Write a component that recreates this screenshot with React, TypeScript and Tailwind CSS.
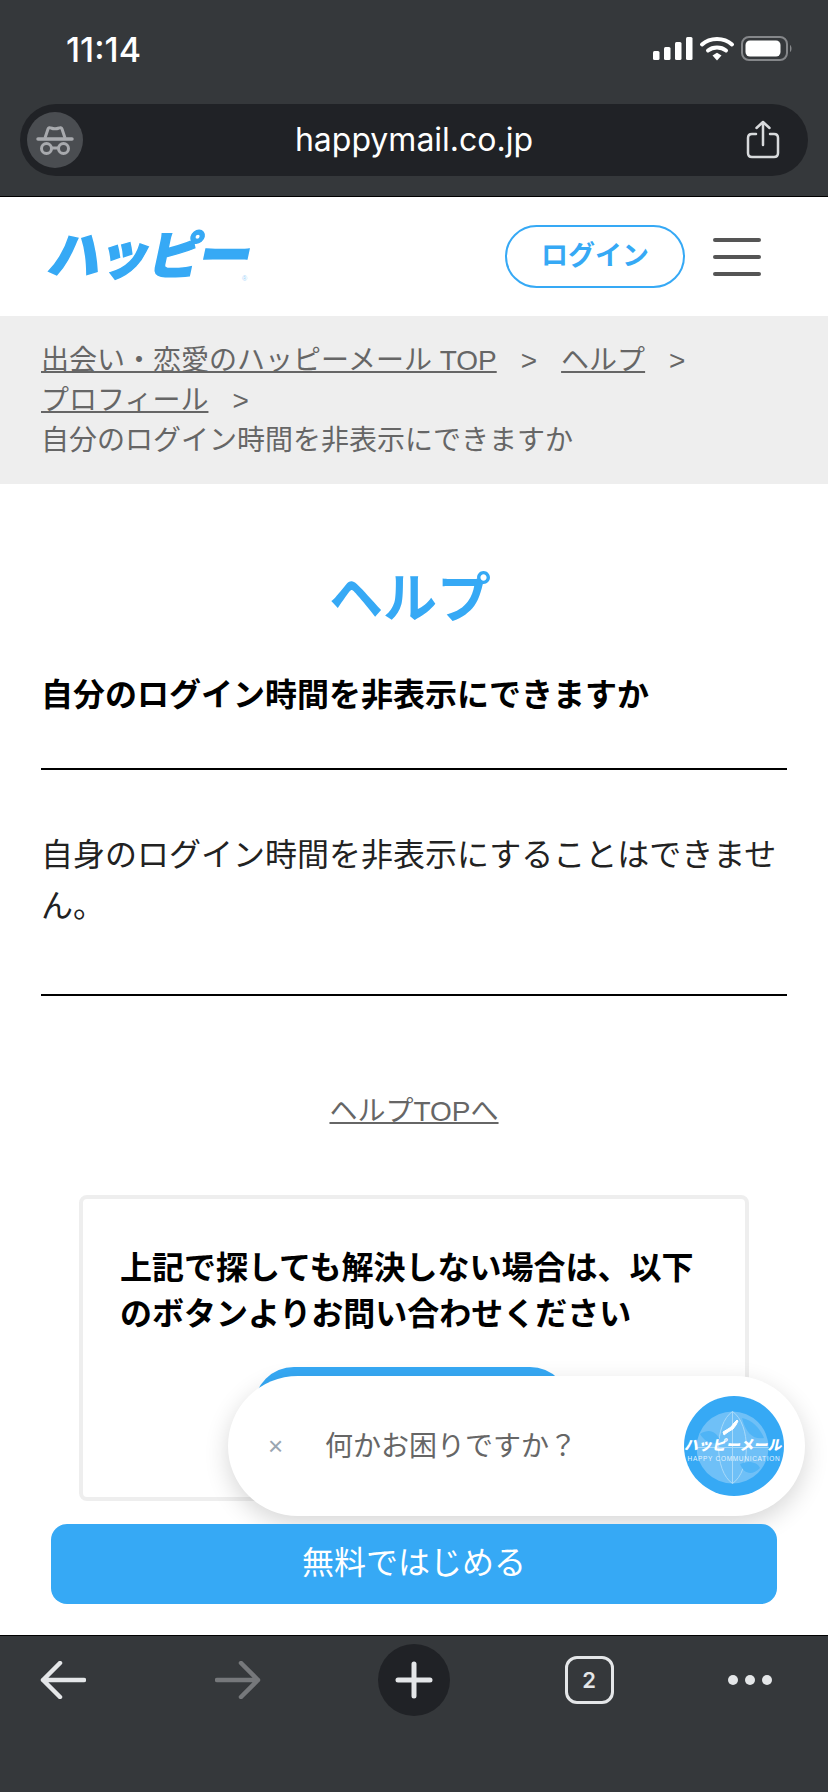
import React from "react"

const jp = "font-['Liberation_Sans','Noto_Sans_CJK_JP','Noto_Sans',sans-serif]"

const StatusIcons = () => (
    <svg width="140" height="26" viewBox="0 0 140 26" fill="none">
        <rect x="0" y="15" width="6.5" height="9" rx="1.5" fill="#fff" />
        <rect x="11" y="11" width="6.5" height="13" rx="1.5" fill="#fff" />
        <rect x="22" y="6" width="6.5" height="18" rx="1.5" fill="#fff" />
        <rect x="33" y="1" width="6.5" height="23" rx="1.5" fill="#fff" />
        <path d="M49 8.5C57 1 71 1 79 8.5" stroke="#fff" strokeWidth="4" strokeLinecap="round" />
        <path d="M55 14.5C60 10.5 68 10.5 73 14.5" stroke="#fff" strokeWidth="4" strokeLinecap="round" />
        <path d="M59.5 19.5L64 16.8L68.5 19.5L64 24.5Z" fill="#fff" />
        <rect x="89" y="1" width="45" height="23" rx="7" stroke="#85878a" strokeWidth="2" />
        <rect x="92.5" y="4.5" width="35" height="16" rx="4.5" fill="#fff" />
        <path d="M137 9C139 10 139 15 137 16Z" fill="#85878a" />
    </svg>
)

const Incognito = () => (
    <svg width="38" height="32" viewBox="0 0 38 32" fill="none" stroke="#a8aaae">
        <path d="M9 14L12 5C12.500 3.500 14 3.500 15 4C17 4.800 21 4.800 23 4C24 3.500 25.500 3.500 26 5L29 14" strokeWidth="3" />
        <path d="M2 15H36" strokeWidth="3.500" strokeLinecap="round" />
        <circle cx="10.500" cy="24.500" r="5" strokeWidth="3" />
        <circle cx="27.500" cy="24.500" r="5" strokeWidth="3" />
        <path d="M15.500 24H22.500" strokeWidth="3" />
    </svg>
)

const ShareIcon = () => (
    <svg width="34" height="40" viewBox="0 0 34 40" fill="none" stroke="#d8dadc" strokeWidth="2.500" strokeLinecap="round" strokeLinejoin="round">
        <path d="M10 14H6C3.500 14 2 15.500 2 18V33C2 35.500 3.500 37 6 37H28C30.500 37 32 35.500 32 33V18C32 15.500 30.500 14 28 14H24" />
        <path d="M17 25V2M10.500 8L17 2L23.500 8" />
    </svg>
)

const Globe = () => (
    <div className="relative w-[100px] h-[100px] rounded-full bg-[#36a9f5] shrink-0">
        <svg className="absolute inset-0" width="100" height="100" viewBox="0 0 100 100" fill="none">
            <circle cx="48.500" cy="51.500" r="36" fill="#6fc0f7" />
            <path d="M12.500 51.500H84.500M48.500 15.500V87.500M48.500 15.500C30 28 30 75 48.500 87.500M48.500 15.500C67 28 67 75 48.500 87.500" stroke="#a9daf9" strokeWidth="1" />
            <path d="M16 38C26 32 32 36 36 44C32 50 22 48 16 38ZM58 22C68 24 76 32 80 42C70 44 62 38 58 22ZM56 68C64 64 74 66 76 72C68 80 60 78 56 68Z" fill="#4fb4f6" />
            <path d="M39 36L44 33L47 31L50 27L53 24L54 25L52 29L49 33L44 36L40 39Z" fill="#fff" stroke="#fff" strokeWidth="1" />
        </svg>
        <div className="absolute left-0 right-0 top-[42px] flex flex-col items-center">
            <span className="text-[14px] leading-[15px] font-black text-white whitespace-nowrap -skew-x-12">ハッピーメール</span>
            <span className="text-[6.500px] leading-[9px] text-[#e3f3fe] whitespace-nowrap tracking-[0.700px] mt-[1px]">HAPPY COMMUNICATION</span>
        </div>
    </div>
)

const App = () => {
    return (
        <div className={`${jp} w-[828px] h-[1792px] flex flex-col overflow-hidden bg-white`}>
            {/* browser top */}
            <div className="h-[197px] shrink-0 bg-[#35383b] border-b border-black">
                <div className="h-[104px] pl-[66px] pr-[35px] pb-[6px] flex items-center justify-between">
                    <span className="font-['Inter',sans-serif] text-[34px] font-medium text-white">11:14</span>
                    <StatusIcons />
                </div>
                <div className="relative mx-[20px] h-[72px] rounded-[36px] bg-[#202226] flex items-center justify-center">
                    <div className="absolute left-[7px] top-[8px] w-[56px] h-[56px] rounded-full bg-[#4a4d51] flex items-center justify-center">
                        <Incognito />
                    </div>
                    <span className="font-['Inter',sans-serif] text-[32px] text-white">happymail.co.jp</span>
                    <div className="absolute right-[28px] top-[16px]"><ShareIcon /></div>
                </div>
            </div>

            <div className="relative flex-1 overflow-hidden">
                {/* site header */}
                <div className="h-[119px] pl-[50px] pr-[67px] flex items-center justify-between">
                    <div className="flex items-end mt-[-2px]">
                        <span className="text-[52px] leading-[60px] font-black text-[#36a9f5] tracking-[-2px] -skew-x-12 [-webkit-text-stroke:1.5px_#36a9f5]">ハッピー</span>
                        <span className="text-[7px] leading-[14px] text-[#9fd4fa] ml-[-8px]">®</span>
                    </div>
                    <div className="flex items-center gap-[28px]">
                        <div className="w-[180px] h-[63px] mt-[-1px] rounded-[32px] border-2 border-[#36a9f5] flex items-center justify-center text-[27px] font-bold text-[#36a9f5]">ログイン</div>
                        <div className="w-[48px] flex flex-col gap-[13px]">
                            <div className="h-[4px] rounded-full bg-[#555]" />
                            <div className="h-[4px] rounded-full bg-[#555]" />
                            <div className="h-[4px] rounded-full bg-[#555]" />
                        </div>
                    </div>
                </div>

                {/* breadcrumb */}
                <div className="h-[168px] bg-[#eeeeee] pt-[25px] pl-[41px] pr-[30px] text-[28px] leading-[40px] text-[#666666]">
                    <div><a className="underline decoration-2">出会い・恋愛のハッピーメール TOP</a><span className="ml-[24px] mr-[24px]">&gt;</span><a className="underline decoration-2">ヘルプ</a><span className="ml-[24px]">&gt;</span></div>
                    <div><a className="underline decoration-2">プロフィール</a><span className="ml-[24px]">&gt;</span></div>
                    <div>自分のログイン時間を非表示にできますか</div>
                </div>

                <div className="px-[41px]">
                    <h1 className="mt-[81px] pr-[8px] text-center text-[54px] leading-[68px] font-bold text-[#36a9f5]">ヘルプ</h1>
                    <p className="mt-[39px] text-[32px] leading-[46px] font-bold text-black">自分のログイン時間を非表示にできますか</p>
                    <div className="mt-[50px] h-[2px] bg-black" />
                    <p className="mt-[60px] text-[32px] leading-[51px] text-[#222222]">自身のログイン時間を非表示にすることはできません。</p>
                    <div className="mt-[62px] h-[2px] bg-black" />
                    <div className="mt-[96px] text-center">
                        <a className="text-[28px] leading-[40px] text-[#666666] underline decoration-2">ヘルプTOPへ</a>
                    </div>
                </div>

                {/* contact box */}
                <div className="mt-[63px] mx-[79px] h-[306px] border-4 border-[#eeeeee] rounded-[8px] pt-[46px] px-[37px]">
                    <p className="text-[32px] leading-[46px] font-bold text-black">上記で探しても解決しない場合は、以下のボタンよりお問い合わせください</p>
                    <div className="mt-[30px] ml-[134px] w-[316px] h-[80px] rounded-[40px] bg-[#36a9f5]" />
                </div>

                {/* floating chat */}
                <div className="absolute left-[228px] top-[1179px] w-[577px] h-[140px] rounded-[70px] bg-white shadow-[0_8px_24px_rgba(0,0,0,0.16)] flex items-center pl-[40px] pr-[21px]">
                    <span className="w-[57px] text-[26px] leading-none text-[#9aa5b1]">×</span>
                    <span className="flex-1 pt-[2px] text-[28px] text-[#666666]">{"何かお困りですか\uFF1F"}</span>
                    <Globe />
                </div>

                {/* cta */}
                <div className="absolute left-[51px] top-[1327px] w-[726px] h-[80px] pb-[3px] rounded-[16px] bg-[#36a9f5] flex items-center justify-center text-[32px] text-white">無料ではじめる</div>
            </div>

            {/* browser bottom */}
            <div className="h-[157px] shrink-0 bg-[#35383b] border-t border-black">
                <div className="h-[88px] grid grid-cols-[126px_224px_128px_222px_100px] items-center justify-items-center">
                    <svg width="46" height="38" viewBox="0 0 46 38" fill="none" stroke="#e4e6e8" strokeWidth="4.500" strokeLinecap="round" strokeLinejoin="round">
                        <path d="M44 19H3M20 2L3 19L20 36" />
                    </svg>
                    <svg width="46" height="38" viewBox="0 0 46 38" fill="none" stroke="#76787b" strokeWidth="4.500" strokeLinecap="round" strokeLinejoin="round">
                        <path d="M2 19H43M26 2L43 19L26 36" />
                    </svg>
                    <div className="w-[72px] h-[72px] rounded-full bg-[#202226] flex items-center justify-center">
                        <svg width="38" height="38" viewBox="0 0 38 38" fill="none" stroke="#e4e6e8" strokeWidth="5" strokeLinecap="round">
                            <path d="M19 3V35M3 19H35" />
                        </svg>
                    </div>
                    <div className="w-[49px] h-[48px] rounded-[12px] border-[3px] border-[#e4e6e8] flex items-center justify-center font-['Inter',sans-serif] text-[22px] font-semibold text-[#e4e6e8]">2</div>
                    <div className="flex gap-[7px]">
                        <div className="w-[10px] h-[10px] rounded-full bg-[#e4e6e8]" />
                        <div className="w-[10px] h-[10px] rounded-full bg-[#e4e6e8]" />
                        <div className="w-[10px] h-[10px] rounded-full bg-[#e4e6e8]" />
                    </div>
                </div>
            </div>
        </div>
    )
}

export default App
